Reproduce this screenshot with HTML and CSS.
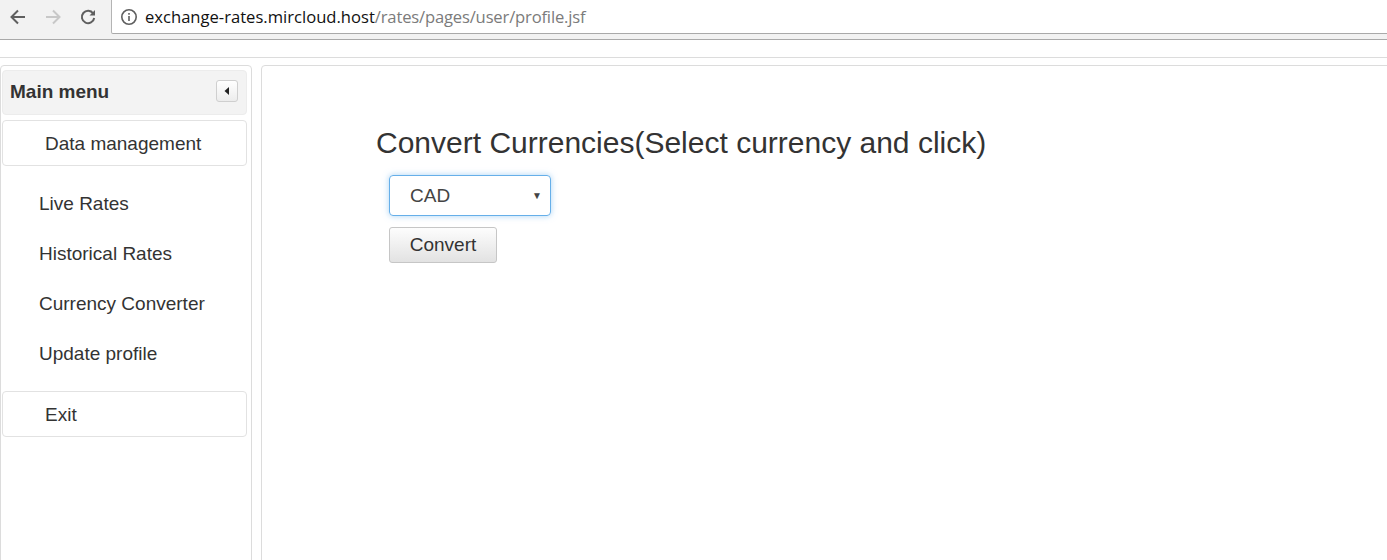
FILE: index.html
```html
<!DOCTYPE html>
<html>
<head>
<meta charset="utf-8">
<link rel="stylesheet" href="styles.css">
</head>
<body>
<div class="chrome">
  <div class="nav">
    <svg class="navicon" width="20" height="20" viewBox="0 0 20 20"><path d="M17 10H4M10 3.5 3.5 10 10 16.5" fill="none" stroke="#5f5f5f" stroke-width="2"/></svg>
    <svg class="navicon" width="20" height="20" viewBox="0 0 20 20"><path d="M3 10h13M10 3.5 16.5 10 10 16.5" fill="none" stroke="#c8c8c8" stroke-width="2"/></svg>
    <svg class="navicon" width="20" height="20" viewBox="0 0 20 20"><path d="M15.2 6.5A6.2 6.2 0 1 0 16.2 11" fill="none" stroke="#5f5f5f" stroke-width="2"/><path d="M17 3v5.5h-5.5z" fill="#5f5f5f"/></svg>
  </div>
  <div class="url">
    <svg class="info" width="18" height="18" viewBox="0 0 18 18"><circle cx="9" cy="9" r="7.2" fill="none" stroke="#5f5f5f" stroke-width="1.6"/><rect x="8.2" y="8" width="1.6" height="5" fill="#5f5f5f"/><rect x="8.2" y="5" width="1.6" height="1.7" fill="#5f5f5f"/></svg>
    <span class="host">exchange-rates.mircloud.host</span><span class="path">/rates/pages/user/profile.jsf</span>
  </div>
</div>
<div class="page">
  <div class="topbar"></div>
  <div class="layout">
    <div class="sidebar">
      <div class="menu-head">
        <span class="menu-title">Main menu</span>
        <span class="collapse"><svg width="8" height="10" viewBox="0 0 8 10"><path d="M6 1v8L1.5 5z" fill="#222"/></svg></span>
      </div>
      <div class="box">Data management</div>
      <ul class="items">
        <li>Live Rates</li>
        <li>Historical Rates</li>
        <li>Currency Converter</li>
        <li>Update profile</li>
      </ul>
      <div class="box">Exit</div>
    </div>
    <div class="main">
      <h1 class="title">Convert Currencies(Select currency and click)</h1>
      <div class="form">
        <div class="select"><span>CAD</span><span class="caret">▼</span></div>
        <button class="btn">Convert</button>
      </div>
    </div>
  </div>
</div>
</body>
</html>
```
FILE: styles.css
```css
html, body {
  margin: 0;
  padding: 0;
  background: #fff;
  overflow: hidden;
}
body {
  font-family: "Liberation Sans", Arial, sans-serif;
  color: #333;
  width: 1387px;
  height: 560px;
}
.chrome {
  height: 39px;
  background: #f2f2f2;
  border-bottom: 1px solid #a9a9a9;
  display: flex;
  align-items: flex-start;
  box-sizing: content-box;
}
.nav {
  display: flex;
  width: 111px;
  height: 34px;
  align-items: center;
  padding-left: 8px;
  box-sizing: border-box;
  gap: 15px;
}
.navicon {
  display: block;
}
.url {
  flex: 1;
  height: 34px;
  box-sizing: border-box;
  background: #fff;
  border-left: 1px solid #b4b4b4;
  border-bottom: 1px solid #a9a9a9;
  border-bottom-left-radius: 2px;
  display: flex;
  align-items: center;
  padding-left: 8px;
  font-family: "Open Sans", "Noto Sans", sans-serif;
  font-size: 16.6px;
}
.info {
  margin-right: 7px;
  flex: none;
}
.host { color: #111; }
.path { color: #7b7b7b; letter-spacing: -0.17px; }
.page {
  padding-top: 17px;
}
.topbar {
  border-top: 1px solid #dcdcdc;
  height: 7px;
}
.layout {
  display: flex;
  gap: 9px;
  margin-right: -10px;
}
.sidebar {
  width: 252px;
  flex: none;
  box-sizing: border-box;
  height: 520px;
  border: 1px solid #dcdcdc;
  border-radius: 4px;
  padding: 4px 4px 0 1px;
  font-size: 19px;
}
.menu-head {
  height: 45px;
  box-sizing: border-box;
  background: #f3f3f3;
  border: 1px solid #ececec;
  border-radius: 4px;
  display: flex;
  align-items: center;
  justify-content: space-between;
  padding: 0 8px 2px 7px;
}
.menu-title {
  font-weight: bold;
  color: #333;
}
.collapse {
  width: 22px;
  height: 22px;
  box-sizing: border-box;
  border: 1px solid #cfcfcf;
  border-radius: 3px;
  background: linear-gradient(#fff, #ececec);
  display: flex;
  align-items: center;
  justify-content: center;
  margin-top: -1px;
}
.box {
  height: 46px;
  margin-top: 5px;
  box-sizing: border-box;
  border: 1px solid #e2e2e2;
  border-radius: 4px;
  line-height: 45px;
  padding-left: 42px;
  color: #333;
}
.items {
  list-style: none;
  margin: 0;
  padding: 13px 0 7px 0;
}
.items li {
  height: 50px;
  line-height: 50px;
  padding-left: 37px;
}
.main {
  flex: 1;
  height: 520px;
  border: 1px solid #dcdcdc;
  border-radius: 4px;
  padding-left: 114px;
}
.title {
  margin: 57px 0 0 0;
  font-weight: normal;
  font-size: 30px;
  line-height: 40px;
  color: #333;
}
.form {
  padding-left: 13px;
  padding-top: 12px;
  font-size: 19px;
}
.select {
  width: 162px;
  height: 41px;
  box-sizing: border-box;
  border: 1px solid #66afe9;
  border-radius: 4px;
  box-shadow: 0 0 6px rgba(102, 175, 233, 0.55);
  display: flex;
  align-items: center;
  justify-content: space-between;
  padding: 0 8px 0 20px;
  color: #444;
}
.caret {
  font-size: 10px;
  color: #444;
}
.btn {
  display: block;
  margin-top: 11px;
  width: 108px;
  height: 36px;
  box-sizing: border-box;
  border: 1px solid #c6c6c6;
  border-radius: 3px;
  background: linear-gradient(#fdfdfd, #e2e2e2);
  font-family: "Liberation Sans", Arial, sans-serif;
  font-size: 19px;
  color: #333;
  padding: 0 0 1px 0;
  text-align: center;
}
```
